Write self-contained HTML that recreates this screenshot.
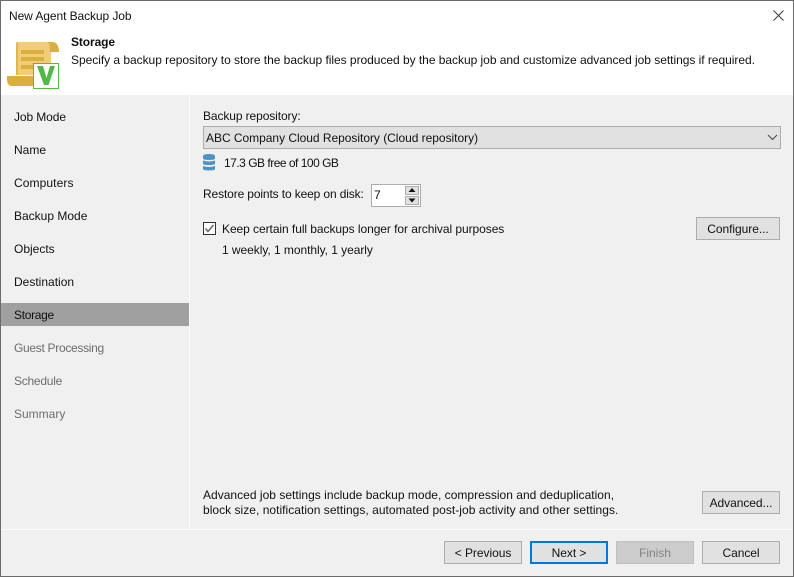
<!DOCTYPE html>
<html><head><meta charset="utf-8">
<style>
html,body{margin:0;padding:0;width:794px;height:577px;overflow:hidden;background:#f0f0f0}
body{position:relative;font-family:"Liberation Sans",sans-serif;font-size:12px;color:#111}
.t{position:absolute;white-space:nowrap;line-height:14px}
.a{position:absolute}
.n{left:14px}
.d{color:#6d6d6d}
.b{position:absolute;box-sizing:border-box;background:#e1e1e1;border:1px solid #adadad;text-align:center;font-size:12px;letter-spacing:-.05px;line-height:23px;height:23px}
</style></head><body>
<div class="a" style="left:0;top:0;width:794px;height:95px;background:#fff"></div>
<div class="a" style="left:189px;top:95px;width:1px;height:434px;background:#fbfbfb"></div>
<div class="a" style="left:0;top:529px;width:794px;height:1px;background:#fbfbfb"></div>
<div class="a" style="left:1px;top:303px;width:188px;height:23px;background:#a0a0a0"></div>

<div class="t" style="left:9px;top:9px;letter-spacing:-.08px">New Agent Backup Job</div>
<svg class="a" style="left:772px;top:9px" width="13" height="13" viewBox="0 0 13 13"><path d="M1.5 1.5L11.5 11.5M11.5 1.5L1.5 11.5" stroke="#333" stroke-width=".9" fill="none"/></svg>
<div class="t" style="left:71px;top:35px;font-weight:bold;letter-spacing:-.1px">Storage</div>
<div class="t" style="left:71px;top:53px;letter-spacing:-.035px">Specify a backup repository to store the backup files produced by the backup job and customize advanced job settings if required.</div>

<svg class="a" style="left:6px;top:41px" width="54" height="48" viewBox="0 0 54 48">
<path d="M10 3Q10 1 12 1H45V34H10Z" fill="#f2cd78"/>
<path d="M10 3Q10 1 12 1V34H10Z" fill="#e0b550"/>
<path d="M42 1H47Q53 2 53 11H44Q44 4 42 1Z" fill="#dcae3e"/>
<rect x="15" y="9" width="23" height="4" fill="#dcae3e"/>
<rect x="15" y="16" width="23" height="4" fill="#dcae3e"/>
<rect x="15" y="24" width="23" height="4" fill="#dcae3e"/>
<path d="M1 35H30V45H6Q1 45 1 38Z" fill="#dcae3e"/>
<rect x="27.5" y="22.5" width="25" height="25" fill="#fff" stroke="#5ab84b"/>
<path d="M31 25H37L40.5 37L44 25H49L42.5 44H38Z" fill="#52b848"/>
</svg>

<div class="t n" style="top:110px;letter-spacing:-.1px">Job Mode</div>
<div class="t n" style="top:143px;letter-spacing:0">Name</div>
<div class="t n" style="top:176px;letter-spacing:.1px">Computers</div>
<div class="t n" style="top:209px;letter-spacing:0">Backup Mode</div>
<div class="t n" style="top:242px;letter-spacing:0">Objects</div>
<div class="t n" style="top:275px;letter-spacing:0">Destination</div>
<div class="t n" style="top:308px;letter-spacing:-.3px">Storage</div>
<div class="t n d" style="top:341px;letter-spacing:-.3px">Guest Processing</div>
<div class="t n d" style="top:374px;letter-spacing:-.25px">Schedule</div>
<div class="t n d" style="top:407px;letter-spacing:0">Summary</div>

<div class="t" style="left:203px;top:109px;letter-spacing:-.1px">Backup repository:</div>
<div class="a" style="left:203px;top:126px;width:578px;height:23px;box-sizing:border-box;background:#e1e1e1;border:1px solid #adadad"></div>
<div class="t" style="left:206px;top:131px;letter-spacing:-.03px">ABC Company Cloud Repository (Cloud repository)</div>
<svg class="a" style="left:767px;top:134px" width="11" height="7" viewBox="0 0 11 7"><path d="M1 1L5.5 5.5L10 1" fill="none" stroke="#444" stroke-width="1"/></svg>

<svg class="a" style="left:203px;top:154px" width="12" height="17" viewBox="0 0 12 17">
<path d="M0 2Q0 0 6 0T12 2V4.4Q12 6 6 6T0 4.4Z" fill="#4d94c6"/>
<path d="M0 6.5Q3 7.5 6 7.5T12 6.5V9.6Q12 11 6 11T0 9.6Z" fill="#4d94c6"/>
<path d="M0 12Q3 13 6 13T12 12V15Q12 16.5 6 16.5T0 15Z" fill="#4d94c6"/>
</svg>
<div class="t" style="left:224px;top:156px;letter-spacing:-.5px">17.3 GB free of 100 GB</div>

<div class="t" style="left:203px;top:187px;letter-spacing:-.13px">Restore points to keep on disk:</div>
<div class="a" style="left:371px;top:184px;width:50px;height:23px;box-sizing:border-box;background:#fff;border:1px solid #adadad"></div>
<div class="t" style="left:374px;top:188px">7</div>
<div class="a" style="left:405px;top:186px;width:14px;height:9px;background:#e1e1e1;border:1px solid #adadad;box-sizing:border-box"></div>
<div class="a" style="left:405px;top:196px;width:14px;height:9px;background:#e1e1e1;border:1px solid #adadad;box-sizing:border-box"></div>
<svg class="a" style="left:405px;top:186px" width="14" height="19" viewBox="0 0 14 19"><path d="M7 2L10.5 6H3.5Z M3.5 12.5H10.5L7 16.5Z" fill="#111"/></svg>

<svg class="a" style="left:203px;top:222px" width="13" height="13" viewBox="0 0 13 13"><rect x=".5" y=".5" width="12" height="12" fill="#fff" stroke="#333"/><path d="M2.5 6.5L5 9.5L10.5 3" fill="none" stroke="#666" stroke-width="1.5"/></svg>
<div class="t" style="left:222px;top:222px;letter-spacing:-.06px">Keep certain full backups longer for archival purposes</div>
<div class="t" style="left:222px;top:243px;letter-spacing:-.05px">1 weekly, 1 monthly, 1 yearly</div>
<div class="b" style="left:696px;top:217px;width:84px">Configure...</div>

<div class="t" style="left:203px;top:488px;letter-spacing:.02px">Advanced job settings include backup mode, compression and deduplication,</div>
<div class="t" style="left:203px;top:503px;letter-spacing:.03px">block size, notification settings, automated post-job activity and other settings.</div>
<div class="b" style="left:702px;top:491px;width:78px">Advanced...</div>

<div class="b" style="left:444px;top:541px;width:78px">&lt; Previous</div>
<div class="b" style="left:530px;top:541px;width:78px;border:2px solid #0078d7;line-height:21px">Next &gt;</div>
<div class="b" style="left:616px;top:541px;width:78px;background:#ccc;border-color:#bfbfbf;color:#838383">Finish</div>
<div class="b" style="left:702px;top:541px;width:78px">Cancel</div>

<div class="a" style="left:0;top:0;width:794px;height:1px;background:#6b6b6b"></div>
<div class="a" style="left:0;top:576px;width:794px;height:1px;background:#6b6b6b"></div>
<div class="a" style="left:0;top:0;width:1px;height:577px;background:#6b6b6b"></div>
<div class="a" style="left:793px;top:0;width:1px;height:577px;background:#6b6b6b"></div>
</body></html>
